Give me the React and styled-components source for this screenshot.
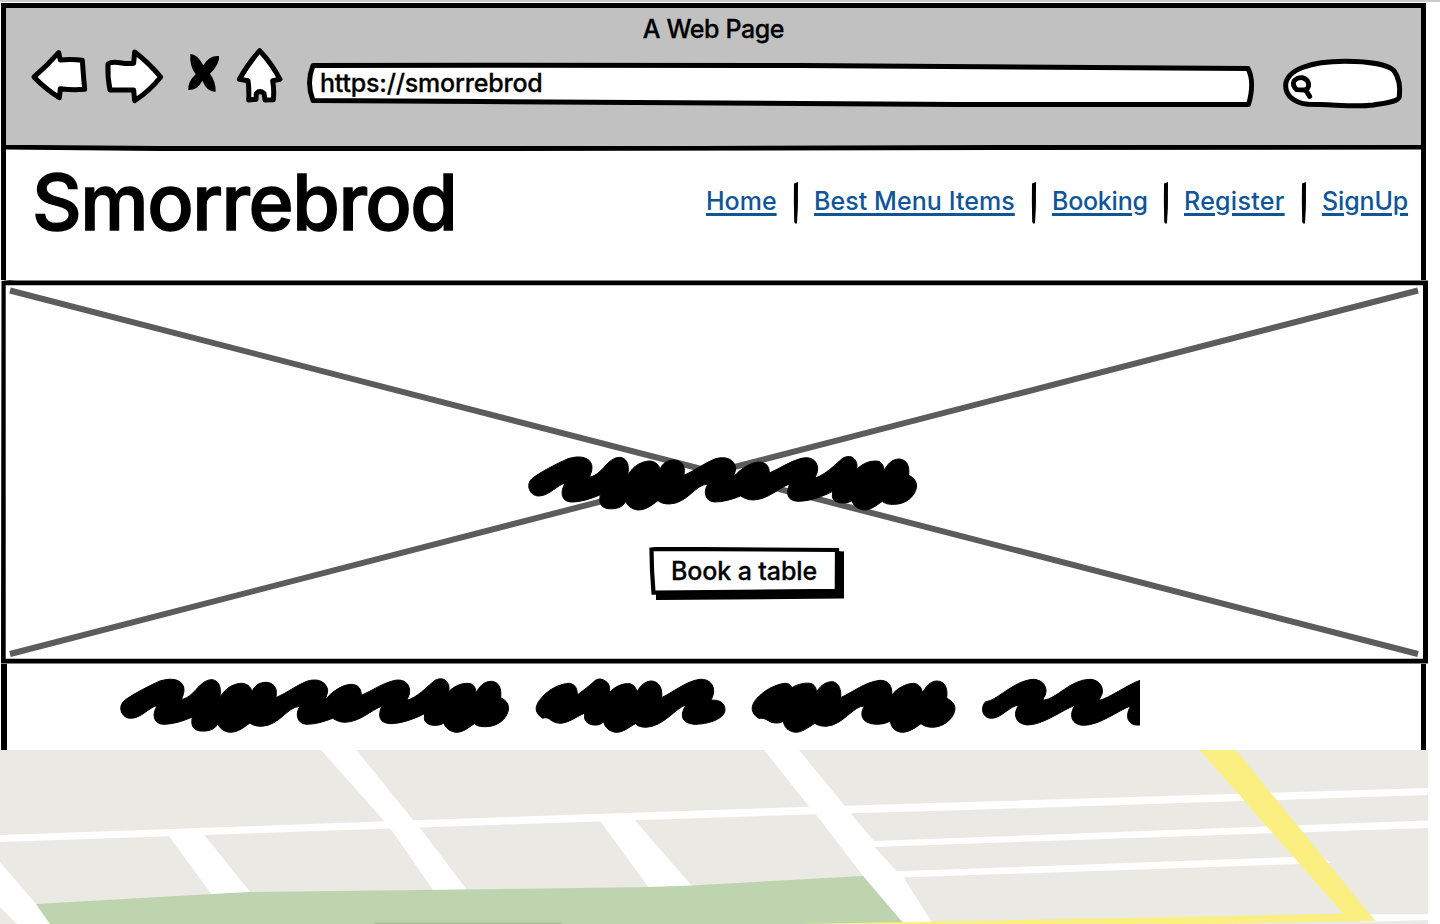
import React from "react";
import styled, { createGlobalStyle } from "styled-components";

const GlobalStyle = createGlobalStyle`
  *, *::before, *::after { box-sizing: border-box; }
  body {
    margin: 0;
    background: #fff;
    color: #000;
    font-family: Inter, "Liberation Sans", sans-serif;
    font-weight: 500;
    overflow: hidden;
  }
  svg { display: block; flex: none; }
`;

const Screen = styled.div`
  display: flex;
  flex-direction: column;
  width: 1440px;
  height: 924px;
  overflow: hidden;
`;

const TopStrip = styled.div`
  height: 2px;
  background: #cbcbcb;
`;

const BrowserFrame = styled.section`
  width: 1425px;
  height: 277px;
  margin: 1px 0 0 1px;
  border: 5px solid #000;
  border-bottom: 0;
`;

const Toolbar = styled.div`
  display: flex;
  flex-direction: column;
  height: 137px;
  background: #c1c1c1;
`;

const WindowTitle = styled.div`
  height: 37px;
  padding-top: 6px;
  text-align: center;
  font-size: 25px;
  line-height: 30px;
  letter-spacing: ${(p) => p.$tracking}px;
  -webkit-text-stroke: 0.3px #000;
`;

const Controls = styled.div`
  display: flex;
  height: 70px;
  padding-left: 24px;
`;

const IconButton = styled.button`
  display: block;
  padding: 0;
  border: 0;
  background: none;
  margin-right: ${(p) => p.$gap}px;
`;

const Field = styled.div`
  position: relative;
  width: ${(p) => p.$width}px;
  margin-right: ${(p) => p.$gap || 0}px;
`;

const UrlText = styled.span`
  position: absolute;
  left: 15px;
  top: 22px;
  font-size: 25px;
  line-height: 32px;
  letter-spacing: ${(p) => p.$tracking}px;
  -webkit-text-stroke: 0.3px #000;
`;

const SiteHeader = styled.header`
  display: flex;
  justify-content: space-between;
  height: 129px;
  padding: 0 13px 0 26px;
`;

const Brand = styled.h1`
  margin: 0;
  padding-top: 3px;
  font-size: 77px;
  line-height: 96px;
  font-weight: 500;
  letter-spacing: ${(p) => p.$tracking}px;
  -webkit-text-stroke: 1.4px #000;
`;

const Nav = styled.nav`
  display: flex;
  align-items: flex-start;
  padding-top: 31px;
`;

const NavLink = styled.a`
  width: ${(p) => p.$width}px;
  padding-top: 3px;
  white-space: nowrap;
  color: #0f5597;
  font-size: 25px;
  line-height: 32px;
  letter-spacing: ${(p) => p.$tracking}px;
  text-decoration: underline;
  text-decoration-thickness: 2.5px;
  text-underline-offset: 3px;
`;

const Hero = styled.section`
  position: relative;
  display: flex;
  flex-direction: column;
  align-items: center;
  width: 1428px;
  height: 384px;
  padding: 174px 0 0 36px;
`;

const Backdrop = styled.svg`
  position: absolute;
  left: 0;
  top: 0;
`;

const HeroScribble = styled.div`
  position: relative;
  margin-left: -18px;
`;

const BookButton = styled.button`
  position: relative;
  width: 196px;
  height: 54px;
  margin: 33px 0 0 29px;
  padding: 0 5px 7px 0;
  border: 0;
  background: none;
  font: 500 25px/32px Inter, "Liberation Sans", sans-serif;
  letter-spacing: ${(p) => p.$tracking}px;
  color: #000;
`;

const ButtonLabel = styled.span`
  position: relative;
  white-space: nowrap;
  -webkit-text-stroke: 0.3px #000;
`;

const NotesSection = styled.section`
  width: 1425px;
  height: 86px;
  margin-left: 1px;
  padding: 6px 0 0 104px;
  border: solid #000;
  border-width: 0 5px 0 6px;
`;

const SCRIBBLE_LONG =
  "M62 144C35 144 22 110 42 92C60 76 120 45 150 32C190 20 215 30 221 50C225 70 215 80 216 88C235 82 245 72 258 58C275 38 290 28 306 28C325 30 332 48 331 65L330 82C345 52 375 38 398 39C415 42 424 52 426 66C430 48 448 35 470 36C490 38 500 52 499 68L498 82C530 68 560 45 590 33C625 22 648 35 653 58C654 72 646 78 648 86C665 65 695 44 722 42C745 42 754 56 754 75C785 62 815 40 850 31C880 24 897 38 899 60C899 78 892 82 892 90C925 78 945 55 968 36C978 24 1000 22 1008 32C1018 42 1018 52 1016 64C1035 45 1060 36 1082 40C1095 46 1098 58 1098 68C1108 50 1120 33 1145 33C1168 36 1175 55 1172 82C1190 90 1198 104 1195 120C1190 145 1165 168 1130 169C1110 170 1100 166 1093 160C1075 172 1060 186 1038 186C1020 184 1005 172 1002 158C985 170 945 168 943 145L944 130C915 145 875 160 840 160C808 158 803 138 815 108C785 118 750 155 705 156C690 156 678 150 668 144C640 155 615 162 590 162C560 160 555 130 570 108C530 110 510 165 455 168C440 168 428 165 420 158C400 172 385 186 360 186C340 184 328 172 323 160C315 180 290 184 270 182C245 178 243 160 247 140C220 152 190 162 158 162C130 160 125 130 142 106C120 108 95 144 62 144Z";
const SCRIBBLE_SHORT =
  "M128 234C100 215 105 195 125 172C145 148 180 130 208 129C228 132 232 148 232 164C250 150 270 135 285 121C298 112 312 116 325 130C330 140 328 148 329 156C345 138 370 128 390 130C405 136 410 146 410 156C420 138 435 122 455 122C478 124 488 145 485 172C525 152 560 122 600 117C630 116 642 135 641 155C640 168 634 172 635 180C660 177 676 190 675 210C672 238 620 252 585 252C550 250 535 230 558 194C530 200 490 260 437 261C420 260 412 256 406 250C385 262 370 276 348 276C328 274 315 262 311 244C300 260 260 258 254 235L254 218C225 232 205 248 180 249C165 248 155 242 148 236C142 232 134 231 128 234Z";
const SCRIBBLE_MEDIUM =
  "M776 234C750 218 752 195 770 175C790 152 825 132 855 129C865 128 872 134 876 142C895 130 920 126 935 130C946 136 950 146 949 156C960 138 975 124 998 124C1018 128 1024 150 1022 172C1060 155 1095 125 1140 120C1165 120 1178 136 1175 165C1190 145 1215 130 1242 129C1258 132 1266 144 1267 157C1278 140 1290 122 1312 122C1335 124 1344 142 1340 174C1358 182 1368 195 1364 212C1358 240 1325 262 1295 261C1280 260 1270 256 1263 250C1245 264 1225 276 1206 276C1185 274 1173 262 1171 242C1150 255 1110 256 1093 240C1082 228 1084 210 1094 197C1060 195 1030 255 978 258C962 258 952 254 944 249C925 262 905 276 887 276C865 274 852 260 850 243C838 250 820 250 806 242C796 235 788 233 776 234Z";
const SCRIBBLE_WAVE =
  "M95 234C66 234 60 200 77 184C95 182 110 170 130 157C160 137 190 118 222 117C250 120 262 140 257 160C255 170 248 172 250 180C292 175 330 118 390 117C418 118 430 140 427 158C424 170 418 172 419 180C450 172 500 135 540 120L540 254C510 258 490 235 512 197C475 210 420 255 370 255C335 254 325 225 345 195C305 210 250 254 202 254C165 250 158 220 176 195C150 195 125 234 95 234Z";

function ToolIcon({ x, width, solid, d }) {
  return (
    <svg width={width} height="70" viewBox={`${x} 45 ${width} 70`}>
      <path
        transform="translate(20 40) scale(.33333)"
        d={d}
        fill={solid ? "#000" : "#fff"}
        stroke={solid ? "none" : "#000"}
        strokeWidth="15"
        strokeLinejoin="round"
      />
    </svg>
  );
}

const tools = [
  { name: "Back", x: 30, width: 60, gap: 14, d: "M42 111Q80 78 116 38L121 60Q155 57 187 61Q190 105 194 148Q155 151 121 146L118 173Q75 146 42 111Z" },
  { name: "Forward", x: 104, width: 62, gap: 20, d: "M344 36Q388 70 422 111Q390 152 344 182L341 150L270 150Q262 110 264 72Q275 64 300 68Q325 72 341 70Z" },
  { name: "Stop", x: 186, width: 36, gap: 14, solid: true, d: "M511 42Q532 42 550 76Q568 45 597 48Q600 72 570 101Q588 125 587 155Q562 157 547 122Q532 151 505 150Q503 125 527 103Q508 78 511 42Z" },
  { name: "Home", x: 236, width: 50, gap: 19, d: "M719 32Q755 70 780 118L758 122Q763 150 760 179L735 180L732 160Q720 150 709 160L708 178L686 180Q688 150 684 122L658 118Q685 70 719 32Z" },
];

const links = [
  { label: "Home", width: 71, tracking: 0 },
  { label: "Best Menu Items", width: 201, tracking: 0.07 },
  { label: "Booking", width: 95, tracking: -0.25 },
  { label: "Register", width: 101, tracking: 0.28 },
  { label: "SignUp", width: 86, tracking: -0.15 },
];

function NavDivider() {
  return (
    <svg width="37" height="43" viewBox="0 0 37 43">
      <path d="M17 1.5L21 0L20.9 25L20 41Q18.8 43 17.2 40Q16.6 20 17 1.5Z" />
    </svg>
  );
}

function StreetMap() {
  return (
    <svg width="1428" height="174" viewBox="0 750 1428 174">
      <defs>
        <filter id="soft" x="-10%" y="-100%" width="120%" height="300%">
          <feGaussianBlur stdDeviation="1.6" />
        </filter>
      </defs>
      <path fill="#eae9e3" d="M0 750H1428V924H0Z" />
      <path fill="#fff" d="M321 750H356.5L413 820L420 828L467 890H433L391.5 830L385 822Z" />
      <path fill="#fff" d="M167 833.5H203L251 893L212 895Z" />
      <path fill="#fff" d="M598 818H633L692 886L649 888Z" />
      <path fill="#fff" d="M764 750H799L844.5 805.5L851 814L874 841L874.5 847L897 871.5L903.5 877.5L933 924H904L863 876L816 814.5L809 806.5Z" />
      <path fill="#fff" d="M0 862L36 904L50 924H17L0 907Z" />
      <path fill="#fff" d="M0 835L500 817.3L810 806.7L960 802.2L1428 788V795L960 810.2L817 814.3L500 824.7L0 842Z" />
      <path fill="#fff" d="M873 841L1428 820.5V828L873 847Z" />
      <path fill="#fff" d="M896 871.3L1322 856L1330 863L902 877.5Z" />
      <path fill="#fff" d="M1360 914.3H1428V920L1360 922Z" />
      <path fill="#bed4ae" d="M36 904L212 894L250 892L500 889L649 887L692 885.5L863 876L904 924H50Z" />
      <path fill="#000" opacity=".2" filter="url(#soft)" d="M374 923.5H562V930H374Z" />
      <path fill="#fbef81" d="M1200 750H1236L1375.5 921L1260 923L1200 924H800L1343.5 913.8Z" />
    </svg>
  );
}

export default function App() {
  return (
    <Screen>
      <GlobalStyle />
      <TopStrip />
      <BrowserFrame>
        <Toolbar>
          <WindowTitle $tracking={-0.4}>A Web Page</WindowTitle>
          <Controls>
            {tools.map((t) => (
              <IconButton key={t.name} aria-label={t.name} $gap={t.gap}>
                <ToolIcon x={t.x} width={t.width} solid={t.solid} d={t.d} />
              </IconButton>
            ))}
            <Field $width={950} $gap={25}>
              <svg width="950" height="70" viewBox="305 45 950 70">
                <path d="M313 65.5L480 65.2L800 65.5L1248 68.5Q1255 82 1248.5 104.5H960L480 101.5L313 100.5Q306 83 313 65.5Z" fill="#fff" stroke="#000" strokeWidth="4.9" strokeLinejoin="round" />
              </svg>
              <UrlText $tracking={-0.2}>https://smorrebrod</UrlText>
            </Field>
            <Field $width={124}>
              <svg width="124" height="70" viewBox="1280 45 124 70">
                <g transform="translate(1270 50) scale(.33333)" fill="none" stroke="#000" strokeLinecap="round" strokeLinejoin="round">
                  <path d="M115 163C70 158 46 135 47 105C50 60 120 34 225 34C300 34 355 45 372 62C385 80 392 105 388 140C385 155 350 158 310 165C260 172 200 164 115 163Z" fill="#fff" strokeWidth="15" />
                  <path d="M80 119Q66 106 72 93Q81 82 97 83Q116 89 116 106Q114 119 103 120Z" strokeWidth="14.5" />
                  <path d="M107 120L119 139" strokeWidth="15" />
                </g>
              </svg>
            </Field>
          </Controls>
        </Toolbar>
        <svg width="1415" height="6" viewBox="6 145 1415 6">
          <path fill="#c1c1c1" d="M6 145H1421V148H6Z" />
          <path d="M6 144.8L160 146L700 146L1000 145L1421 144.8V149.6L1000 150L500 151L160 150.9L6 149.5Z" />
        </svg>
        <SiteHeader>
          <Brand $tracking={-1.45}>Smorrebrod</Brand>
          <Nav>
            {links.map((l, i) => (
              <React.Fragment key={l.label}>
                {i > 0 && <NavDivider />}
                <NavLink $width={l.width} $tracking={l.tracking}>{l.label}</NavLink>
              </React.Fragment>
            ))}
          </Nav>
        </SiteHeader>
      </BrowserFrame>
      <Hero>
        <Backdrop width="1428" height="384" viewBox="0 280 1428 384">
          <path fill="#fff" d="M1 280H1428V664H1Z" />
          <path d="M10 290.5L1418 654M10 654L1418 290.5" stroke="#5c5c5e" strokeWidth="6" />
          <path fillRule="evenodd" d="M1.5 281Q8 279.7 16 280.5H1428V663.5H1ZM5.7 285.3V658.7H1423V285.3Z" />
        </Backdrop>
        <HeroScribble>
          <svg width="410" height="60" viewBox="0 6 410 60">
            <path transform="scale(.33333)" d={SCRIBBLE_LONG} stroke="#000" strokeWidth="3" />
          </svg>
        </HeroScribble>
        <BookButton $tracking={-0.1}>
          <Backdrop width="196" height="54" viewBox="649 547 196 54">
            <path d="M656 590V600L844 598.5V551.5L836 551V590Z" />
            <path d="M651.5 549.5L658 548.8L837 550L836.8 590.8L740 591.8L653.5 592.7L652 570Z" fill="#fff" stroke="#000" strokeWidth="4.2" />
          </Backdrop>
          <ButtonLabel>Book a table</ButtonLabel>
        </BookButton>
      </Hero>
      <NotesSection>
        <svg width="1029" height="70" viewBox="111 670 1029 70" stroke="#000" strokeWidth="3">
          <path transform="translate(110 670.3) scale(.33333)" d={SCRIBBLE_LONG} />
          <g transform="translate(500 640.3) scale(.33333)">
            <path d={SCRIBBLE_SHORT} />
            <path d={SCRIBBLE_MEDIUM} />
          </g>
          <path transform="translate(960 640.3) scale(.33333)" d={SCRIBBLE_WAVE} />
        </svg>
      </NotesSection>
      <StreetMap />
    </Screen>
  );
}
